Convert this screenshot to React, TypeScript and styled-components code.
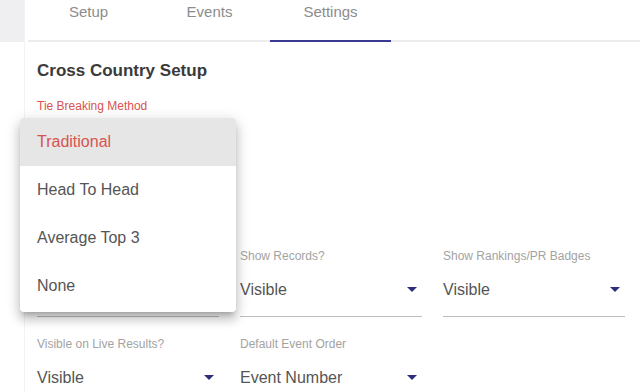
import React from 'react';
import styled, { createGlobalStyle } from 'styled-components';

const GlobalStyle = createGlobalStyle`
   html, body {
      margin: 0;
      padding: 0;
      background: #fff;
      font-family: "Liberation Sans", Arial, sans-serif;
   }
`;

const Page = styled.div`
   display: flex;
   width: 640px;
   height: 392px;
   overflow: hidden;
`;

const Sidebar = styled.div`
   width: 24px;
   flex-shrink: 0;
   display: flex;
   flex-direction: column;
   border-right: 1px solid #f2f2f4;
`;

const SidebarTop = styled.div`
   height: 42px;
   flex-shrink: 0;
   background-color: #efeff1;
`;

const Main = styled.div`
   flex: 1;
   display: flex;
   flex-direction: column;
`;

const TabBar = styled.div`
   display: flex;
   flex-shrink: 0;
   height: 40px;
   margin-left: 3px;
   border-bottom: 2px solid #ececef;
`;

const Tab = styled.div<{ $active?: boolean }>`
   width: 121px;
   display: flex;
   justify-content: center;
   padding-top: 3px;
   font-size: 15px;
   line-height: 18px;
   color: #8c8c8c;
   box-sizing: border-box;
   border-bottom: 2px solid ${(p) => (p.$active ? '#3a3a92' : 'transparent')};
   margin-bottom: -2px;
`;

const Content = styled.div`
   flex-shrink: 0;
   padding: 19px 0 0 12px;
`;

const Heading = styled.h2`
   margin: 0;
   font-size: 17px;
   line-height: 20px;
   font-weight: bold;
   color: #3a3a3a;
`;

const TieField = styled.div`
   position: relative;
   width: 182px;
   margin-top: 18px;
   margin-bottom: 82px;
`;

const Label = styled.div<{ $focused?: boolean }>`
   height: 14px;
   font-size: 12px;
   line-height: 14px;
   color: ${(p) => (p.$focused ? '#d9534f' : '#a3a3a3')};
   white-space: nowrap;
`;

const Select = styled.div`
   height: 53px;
   display: flex;
   align-items: center;
   justify-content: space-between;
   padding-right: 5px;
   border-bottom: 1px solid #bdbdbd;
   font-size: 16px;
   color: #555;
`;

const Arrow = styled.span`
   width: 0;
   height: 0;
   margin-left: auto;
   border-left: 5px solid transparent;
   border-right: 5px solid transparent;
   border-top: 5px solid #2d2d7e;
`;

const Grid = styled.div`
   display: grid;
   grid-template-columns: repeat(3, 182px);
   column-gap: 21px;
   row-gap: 20px;
`;

const Menu = styled.ul`
   position: absolute;
   top: 19px;
   left: -17px;
   width: 216px;
   margin: 0;
   padding: 0 0 2px;
   list-style: none;
   background: #fff;
   border-radius: 4px;
   overflow: hidden;
   box-shadow: 0 5px 5px -3px rgba(0, 0, 0, 0.2), 0 8px 10px 1px rgba(0, 0, 0, 0.14),
      0 3px 14px 2px rgba(0, 0, 0, 0.12);
   z-index: 2;
`;

const MenuItem = styled.li<{ $selected?: boolean }>`
   height: 48px;
   display: flex;
   align-items: center;
   padding-left: 17px;
   font-size: 16px;
   color: ${(p) => (p.$selected ? '#d9534f' : '#555')};
   background: ${(p) => (p.$selected ? '#e6e6e6' : 'transparent')};
`;

// first field sits under the open menu, so its texts are not shown
const fields = [
   { label: '', value: '' },
   { label: 'Show Records?', value: 'Visible' },
   { label: 'Show Rankings/PR Badges', value: 'Visible' },
   { label: 'Visible on Live Results?', value: 'Visible' },
   { label: 'Default Event Order', value: 'Event Number' },
];

const options = ['Traditional', 'Head To Head', 'Average Top 3', 'None'];

const App = () => {
   return (
      <>
         <GlobalStyle />
         <Page>
            <Sidebar>
               <SidebarTop />
            </Sidebar>
            <Main>
               <TabBar>
                  <Tab>Setup</Tab>
                  <Tab>Events</Tab>
                  <Tab $active>Settings</Tab>
               </TabBar>
               <Content>
                  <Heading>Cross Country Setup</Heading>
                  <TieField>
                     <Label $focused>Tie Breaking Method</Label>
                     <Select>
                        <Arrow />
                     </Select>
                     <Menu>
                        {options.map((o, i) => (
                           <MenuItem key={o} $selected={i === 0}>
                              {o}
                           </MenuItem>
                        ))}
                     </Menu>
                  </TieField>
                  <Grid>
                     {fields.map((f, i) => (
                        <div key={i}>
                           <Label>{f.label}</Label>
                           <Select>
                              {f.value}
                              <Arrow />
                           </Select>
                        </div>
                     ))}
                  </Grid>
               </Content>
            </Main>
         </Page>
      </>
   );
};

export default App;
